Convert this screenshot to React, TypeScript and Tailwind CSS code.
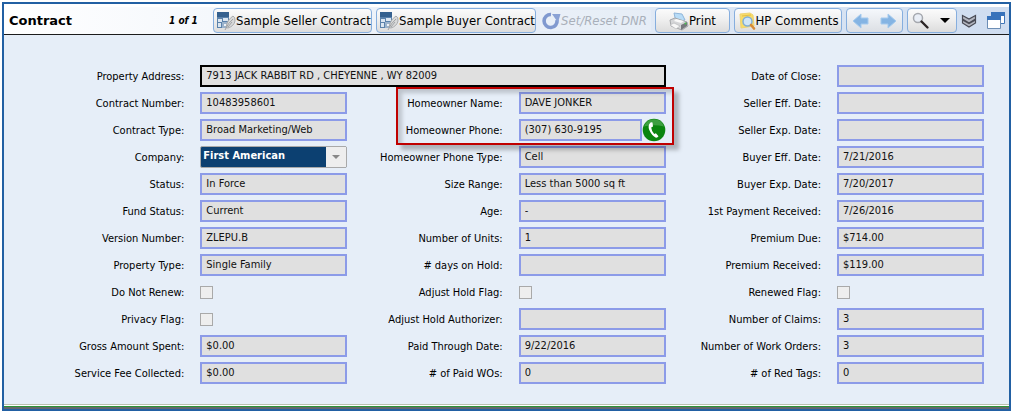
import { type ReactNode } from "react";

const body = "font-['DejaVu_Sans_Condensed','DejaVu_Sans',sans-serif]";

type Field = { label: string; value?: string; kind?: "text" | "check" | "select" | "phone" | "wide" };

const rows: Field[][] = [
  [
    { label: "Property Address", value: "7913 JACK RABBIT RD , CHEYENNE , WY 82009", kind: "wide" },
    { label: "Date of Close", value: "" },
  ],
  [
    { label: "Contract Number", value: "10483958601" },
    { label: "Homeowner Name", value: "DAVE JONKER" },
    { label: "Seller Eff. Date", value: "" },
  ],
  [
    { label: "Contract Type", value: "Broad Marketing/Web" },
    { label: "Homeowner Phone", value: "(307) 630-9195", kind: "phone" },
    { label: "Seller Exp. Date", value: "" },
  ],
  [
    { label: "Company", value: "First American", kind: "select" },
    { label: "Homeowner Phone Type", value: "Cell" },
    { label: "Buyer Eff. Date", value: "7/21/2016" },
  ],
  [
    { label: "Status", value: "In Force" },
    { label: "Size Range", value: "Less than 5000 sq ft" },
    { label: "Buyer Exp. Date", value: "7/20/2017" },
  ],
  [
    { label: "Fund Status", value: "Current" },
    { label: "Age", value: "-" },
    { label: "1st Payment Received", value: "7/26/2016" },
  ],
  [
    { label: "Version Number", value: "ZLEPU.B" },
    { label: "Number of Units", value: "1" },
    { label: "Premium Due", value: "$714.00" },
  ],
  [
    { label: "Property Type", value: "Single Family" },
    { label: "# days on Hold", value: "" },
    { label: "Premium Received", value: "$119.00" },
  ],
  [
    { label: "Do Not Renew", kind: "check" },
    { label: "Adjust Hold Flag", kind: "check" },
    { label: "Renewed Flag", kind: "check" },
  ],
  [
    { label: "Privacy Flag", kind: "check" },
    { label: "Adjust Hold Authorizer", value: "" },
    { label: "Number of Claims", value: "3" },
  ],
  [
    { label: "Gross Amount Spent", value: "$0.00" },
    { label: "Paid Through Date", value: "9/22/2016" },
    { label: "Number of Work Orders", value: "3" },
  ],
  [
    { label: "Service Fee Collected", value: "$0.00" },
    { label: "# of Paid WOs", value: "0" },
    { label: "# of Red Tags", value: "0" },
  ],
];

const DocIcon = () => (
  <svg width="20" height="20" viewBox="0 0 20 20" className="shrink-0" aria-hidden="true">
    <rect x="1" y="1" width="12" height="16" fill="#5b82ab" />
    <path d="M1 1h12v5H1z" fill="#35618f" />
    <path d="M2 8h4v3H2zM7 7h5v3H7zM2 12h3v4H2z" fill="#dbe6f1" />
    <path d="M6 11h7v6H6z" fill="#9bb3cc" />
    <path d="M8 13h3v2H8z" fill="#eef3f8" />
    <path d="M10 16.500Q11 9 17 5q2.500 1 2 5-1 5-7 7z" fill="#d9dada" stroke="#a9abad" />
    <path d="M9 19q3-7 8-11M12 16l4-5" fill="none" stroke="#a0a2a4" />
  </svg>
);

const ResetIcon = () => (
  <svg width="20" height="20" viewBox="0 0 20 20" className="shrink-0" aria-hidden="true">
    <path d="M10 3.500A6.500 6.500 0 1 0 16 9" fill="none" stroke="#8199cf" strokeWidth="3.600" />
    <path d="M11 3h8.500L17 11.500z" fill="#8ba2d5" />
  </svg>
);

const PrintIcon = () => (
  <svg width="20" height="20" viewBox="0 0 20 20" className="shrink-0" aria-hidden="true">
    <path d="M5 2l8 1 3 6-9 2z" fill="#b8dcf7" stroke="#8fb6da" />
    <path d="M1 9l5-2 12 4 1 4-6 4-11-4z" fill="#d5d6d8" stroke="#a5a7aa" />
    <path d="M7 8l8 2-3 2-7-2z" fill="#fafafa" />
    <path d="M12 14l6-3v4l-6 4z" fill="#77797d" />
    <path d="M1 14l4-2 6 3-4 3z" fill="#f7f7f7" stroke="#b0b2b5" strokeWidth=".6" />
    <circle cx="16.500" cy="12.500" r="1" fill="#47c04c" />
  </svg>
);

const CommentsIcon = () => (
  <svg width="18" height="20" viewBox="0 0 18 20" className="shrink-0" aria-hidden="true">
    <path d="M2 3l10-1 3 2 1 11-13 2z" fill="#f8dc68" stroke="#efd471" />
    <path d="M4 5l9-1" stroke="#e3bd46" />
    <circle cx="9.500" cy="10.500" r="4.500" fill="#cfe6f8" stroke="#81aed6" strokeWidth="1.500" />
    <path d="M13 14l3 3.500" stroke="#d68a38" strokeWidth="2.600" strokeLinecap="round" />
  </svg>
);

const Arrow = ({ flip }: { flip?: boolean }) => (
  <svg width="18" height="16" viewBox="0 0 18 16" className={flip ? "rotate-180" : ""} aria-hidden="true">
    <path d="M1 8l8-7v4h7v6H9v4z" fill="#85b4e3" stroke="#a6cbee" />
  </svg>
);

const SearchIcon = () => (
  <svg width="18" height="18" viewBox="0 0 18 18" aria-hidden="true">
    <circle cx="6" cy="6" r="4.500" fill="#e9eef6" stroke="#a5a8ae" strokeWidth="1.500" />
    <path d="M9.500 9.500l6 6" stroke="#2b2425" strokeWidth="2.400" strokeLinecap="round" />
  </svg>
);

const ToolButton = ({ children, className = "" }: { children: ReactNode; className?: string }) => (
  <button
    type="button"
    className={`flex h-[25px] items-center whitespace-nowrap rounded-sm border border-[#86aede] bg-linear-to-b from-[#fbfbfb] via-[#eeeeee] to-[#dcdcdc] text-[13px] ${className}`}
  >
    {children}
  </button>
);

const fieldBase = "block h-[22px] w-full min-w-0 border-2 bg-[#e0e0e0] px-1 pb-0.5 text-[11px] leading-4 text-[#111] outline-none";

const Control = ({ id, field }: { id: string; field: Field }) => {
  if (field.kind === "check") {
    return <input id={id} type="checkbox" disabled className="size-[13px] appearance-none border border-[#a9a9a9] bg-[#eeeeee]" />;
  }
  if (field.kind === "select") {
    return (
      <div className="relative h-[22px] w-full">
        <select
          id={id}
          className="block h-full w-full appearance-none rounded-xs border border-[#a9a9a9] bg-[#0c4071] pb-0.5 pl-0.5 pr-6 text-[11px] font-bold leading-4 text-white outline-none"
        >
          <option>{field.value}</option>
        </select>
        <span className="pointer-events-none absolute inset-y-px right-px flex w-5 items-center justify-center bg-[#eeeeee]">
          <svg width="8" height="4" viewBox="0 0 8 4" aria-hidden="true">
            <path d="M0 0h8L4 4z" fill="#888" />
          </svg>
        </span>
      </div>
    );
  }
  if (field.kind === "phone") {
    return (
      <div className="flex w-full items-center">
        <input id={id} readOnly defaultValue={field.value} className={`${fieldBase} border-[#8c9be8]`} />
        <button type="button" aria-label="Call homeowner" className="-my-1 shrink-0">
          <svg width="24" height="24" viewBox="0 0 24 24" aria-hidden="true">
            <circle cx="12" cy="12" r="11.300" fill="#0b850f" />
            <path d="M2 8.500a10.500 10.500 0 0 1 20 0Q12 6 2 8.500z" fill="#3d9f40" />
            <path d="M8.500 4.500q-3 2.500-1.200 7.500 2.500 5.500 6.200 7.500 1.800.6 3-1.300l-2.600-3-1.700.8q-2.600-2.800-3-6.500l1.800-.9L10.500 4.500q-1-.6-2 0z" fill="#fff" />
          </svg>
        </button>
      </div>
    );
  }
  const edge = field.kind === "wide" ? "border-black" : "border-[#8c9be8]";
  return <input id={id} readOnly defaultValue={field.value} className={`${fieldBase} ${edge}`} />;
};

export default function App() {
  return (
    <main className={`bg-white p-0.5 pb-px text-black ${body}`}>
      <section className="mr-px border-2 border-[#2260a3] bg-[#e6eef8]">
        <header className="flex h-[31px] items-center border-b border-t-[3px] border-b-[#1c1c1c] border-t-white bg-linear-to-r from-white to-[#cfddf0] pl-[5px] pr-1">
          <h1 className="w-40 font-['DejaVu_Sans',sans-serif] text-[13px] font-bold leading-5">Contract</h1>
          <span className="text-[10px] font-bold italic">1 of 1</span>
          <div className="ml-auto flex items-center gap-1">
            <ToolButton className="w-[159px] pl-0.5"><DocIcon />Sample Seller Contract</ToolButton>
            <ToolButton className="w-[160px] pl-0.5"><DocIcon />Sample Buyer Contract</ToolButton>
            <button type="button" disabled className="flex h-[21px] w-[111px] items-center whitespace-nowrap bg-white/20 pl-px text-[13px] italic text-[#a9b0ba]">
              <ResetIcon />Set/Reset DNR
            </button>
            <ToolButton className="w-[75px] justify-center"><PrintIcon />Print</ToolButton>
            <ToolButton className="w-[108px] justify-center"><CommentsIcon />HP Comments</ToolButton>
            <div className="flex h-[25px] w-[57px] items-center justify-around rounded-sm border border-[#86aede] bg-linear-to-b from-[#f5f8fc] to-[#dcdfe4]">
              <button type="button" aria-label="Previous"><Arrow /></button>
              <button type="button" aria-label="Next"><Arrow flip /></button>
            </div>
            <ToolButton className="w-[50px] justify-between pl-1 pr-1.5">
              <SearchIcon />
              <svg width="10" height="5" viewBox="0 0 10 5" aria-label="Search options"><path d="M0 0h10L5 5z" /></svg>
            </ToolButton>
            <button type="button" aria-label="Collapse">
              <svg width="16" height="14" viewBox="0 0 16 14" aria-hidden="true">
                <path d="M1.500 1.500L8 5l6.500-3.500V5L8 9 1.500 5zM1.500 6L8 9.500 14.500 6v3L8 13 1.500 9z" fill="#b3b6c0" stroke="#494b55" strokeWidth="1.200" />
              </svg>
            </button>
            <button type="button" aria-label="Open in window" className="ml-1.5">
              <svg width="18" height="17" viewBox="0 0 18 17" aria-hidden="true">
                <path d="M4.500.5h13v11h-13z" fill="#fff" stroke="#3f75b8" />
                <path d="M4 0h14v4H4z" fill="#3873bb" />
                <path d="M.5 4.500h13v12H.5z" fill="#fff" stroke="#6d8eb5" />
                <path d="M0 4h14v4H0z" fill="#3873bb" />
              </svg>
            </button>
          </div>
        </header>

        <form className="grid auto-rows-[22px] grid-cols-[1fr_147px_1fr_147px_1fr_147px] items-center gap-y-[5px] px-[25px] pb-5 pt-[30px]">
          {rows.flatMap((row, r) =>
            row.flatMap((field, c) => {
              const id = `field-${r}-${c}`;
              const wide = field.kind === "wide";
              const column = (c + 3 - row.length) * 2 + 1 - (wide ? 2 : 0);
              return [
                <label
                  key={`${id}-label`}
                  htmlFor={id}
                  style={{ gridRow: r + 1, gridColumn: column }}
                  className="whitespace-nowrap pr-4 pt-0.5 text-right text-[11px] leading-4"
                >
                  {field.label}:
                </label>,
                <div key={id} style={{ gridRow: r + 1, gridColumn: `${column + 1} / span ${wide ? 3 : 1}` }} className="flex items-center">
                  <Control id={id} field={field} />
                </div>,
              ];
            }),
          )}
          <div className="pointer-events-none relative col-span-2 col-start-3 row-span-2 row-start-2 self-stretch">
            <div className="absolute -bottom-1 -right-2 -top-[5px] left-[49px] border-2 border-[#c00000] shadow-[5px_5px_4px_rgba(0,0,0,0.25),inset_4px_4px_4px_rgba(0,0,0,0.18)]" />
          </div>
        </form>

        <div className="h-px bg-[#b9c0ad]" />
        <div className="h-px bg-white" />
        <div className="h-px bg-[#2b9334]" />
        <div className="h-0.5 bg-[#63676b]" />
      </section>
    </main>
  );
}
